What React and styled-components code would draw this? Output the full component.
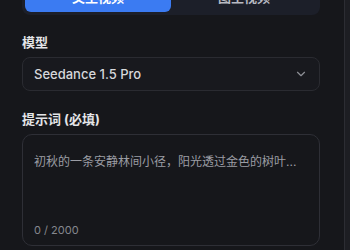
import React from 'react';
import styled, { createGlobalStyle } from 'styled-components';
import { ChevronDown } from 'lucide-react';

const GlobalStyle = createGlobalStyle`
  html, body {
    margin: 0;
    padding: 0;
    background: #1d1e23;
    overflow: hidden;
  }
  body {
    font-family: Inter, "Noto Sans CJK SC", sans-serif;
  }
`;

const Page = styled.div`
  display: flex;
  height: 250px;
`;

const Panel = styled.div`
  width: 345px;
  flex-shrink: 0;
  background: #16171b;
  border-right: 1px solid #2c2d33;
  box-sizing: border-box;
  padding: 0 24px 0 22px;
  display: flex;
  flex-direction: column;
`;

const Tabs = styled.div`
  margin-top: -22px;
  display: flex;
  padding: 3px;
  background: #1c1f29;
  border-radius: 8px;
`;

const Tab = styled.div`
  flex: 1;
  height: 31px;
  display: flex;
  align-items: center;
  justify-content: center;
  border-radius: 6px;
  font-size: 13px;
  font-weight: 600;
  background: ${p => (p.$active ? '#3b7bf2' : 'transparent')};
  color: ${p => (p.$active ? '#ffffff' : '#b8bac2')};
`;

const Label = styled.div`
  font-size: 13px;
  font-weight: 700;
  line-height: 18px;
  color: #e4e5e8;
  margin-top: ${p => p.$top || 18}px;
  margin-bottom: 6px;
`;

const Select = styled.div`
  height: 34px;
  box-sizing: border-box;
  border: 1px solid #2a2b31;
  border-radius: 8px;
  background: #18191e;
  display: flex;
  align-items: center;
  justify-content: space-between;
  padding: 0 11px;
  font-size: 13px;
  font-weight: 500;
  color: #d6d7db;
`;

const Chevron = styled(ChevronDown)`
  color: #8d8f96;
`;

const PromptBox = styled.div`
  height: 112px;
  box-sizing: border-box;
  border: 1px solid #2e2f36;
  border-radius: 10px;
  background: #16171b;
  padding: 18px 11px 8px 11px;
  display: flex;
  flex-direction: column;
  justify-content: space-between;
`;

const Placeholder = styled.div`
  font-size: 12px;
  line-height: 18px;
  color: #9b9da4;
  white-space: nowrap;
`;

const Counter = styled.div`
  font-size: 11px;
  color: #85878e;
`;

export default function App() {
  return (
    <>
      <GlobalStyle />
      <Page>
        <Panel>
          <Tabs>
            <Tab $active>文生视频</Tab>
            <Tab>图生视频</Tab>
          </Tabs>
          <Label>模型</Label>
          <Select>
            <span>Seedance 1.5 Pro</span>
            <Chevron size={14} strokeWidth={2} />
          </Select>
          <Label $top={19}>提示词 (必填)</Label>
          <PromptBox>
            <Placeholder>初秋的一条安静林间小径，阳光透过金色的树叶...</Placeholder>
            <Counter>0 / 2000</Counter>
          </PromptBox>
        </Panel>
      </Page>
    </>
  );
}
